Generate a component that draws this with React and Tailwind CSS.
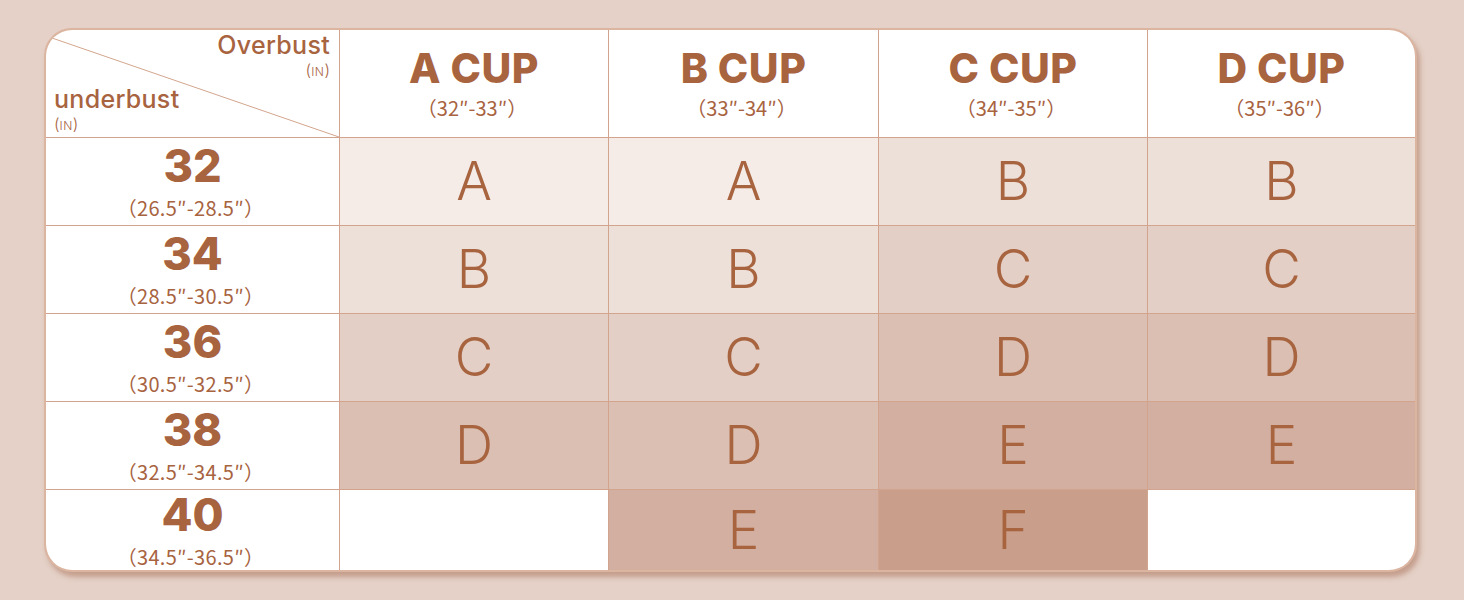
import React from "react";

const L = {
  w: "bg-white",
  1: "bg-[#f5ece8]",
  2: "bg-[#ede0d9]",
  3: "bg-[#e3cfc6]",
  4: "bg-[#dbbfb2]",
  5: "bg-[#d2afa0]",
  6: "bg-[#c99f8b]",
};

const rows = [
  { n: "32", r: "（26.5″-28.5″）", cells: [["A", 1], ["A", 1], ["B", 2], ["B", 2]] },
  { n: "34", r: "（28.5″-30.5″）", cells: [["B", 2], ["B", 2], ["C", 3], ["C", 3]] },
  { n: "36", r: "（30.5″-32.5″）", cells: [["C", 3], ["C", 3], ["D", 4], ["D", 4]] },
  { n: "38", r: "（32.5″-34.5″）", cells: [["D", 4], ["D", 4], ["E", 5], ["E", 5]] },
  { n: "40", r: "（34.5″-36.5″）", cells: [["", "w"], ["E", 5], ["F", 6], ["", "w"]] },
];

const heads = [
  ["A CUP", "（32″-33″）"],
  ["B CUP", "（33″-34″）"],
  ["C CUP", "（34″-35″）"],
  ["D CUP", "（35″-36″）"],
];

const head = { fontFamily: "Inter, 'Noto Sans', sans-serif" };
const small = { fontFamily: "'Noto Sans CJK SC', 'Noto Sans', sans-serif" };

function Unit() {
  return (
    <span className="text-[16px] leading-[18px] font-light" style={head}>
      (<span className="text-[12px] tracking-[0.5px]">IN</span>)
    </span>
  );
}

export default function App() {
  return (
    <div className="w-[1464px] h-[600px] bg-[#e5d1c7] pl-[44px] pt-[28px] text-[#a8633f]">
      <div className="w-[1373px] h-[544px] rounded-[28px] border-2 border-[#dcb5a1] overflow-hidden shadow-[3px_5px_5px_rgba(165,110,85,0.5)] bg-[#d2a48d]">
        <div className="grid grid-cols-[293px_268px_269px_268px_267px] grid-rows-[107px_87px_87px_87px_87px_80px] gap-px">
          <div className="relative bg-white">
            <svg className="absolute inset-0" width="293" height="107">
              <line x1="6" y1="8" x2="293" y2="107" stroke="#d3a58e" strokeWidth="1" />
            </svg>
            <div className="absolute right-[9px] top-[0px] flex flex-col items-end" style={head}>
              <span className="text-[25px] font-medium leading-[31px] tracking-[0.3px]">Overbust</span>
              <Unit />
            </div>
            <div className="absolute left-[8px] top-[54px] flex flex-col items-start" style={head}>
              <span className="text-[25px] font-medium leading-[31px] tracking-[0.3px]">underbust</span>
              <Unit />
            </div>
          </div>
          {heads.map(([t, r]) => (
            <div key={t} className="bg-white flex flex-col items-center justify-center pb-[3px]">
              <span className="text-[41px] font-extrabold leading-[50px] tracking-[0.5px]" style={head}>{t}</span>
              <span className="text-[20px] leading-[29px] -ml-[4px]" style={small}>{r}</span>
            </div>
          ))}
          {rows.map((row) => (
            <React.Fragment key={row.n}>
              <div className="bg-white flex flex-col items-center justify-center pb-[3px]">
                <span className="text-[45px] font-extrabold leading-[55px]" style={head}>{row.n}</span>
                <span className="text-[20px] leading-[29px] -ml-[4px] tracking-[0.3px]" style={small}>{row.r}</span>
              </div>
              {row.cells.map(([c, lv], i) => (
                <div key={i} className={`${L[lv]} flex items-center justify-center`}>
                  <span className="text-[53px] font-light leading-none" style={head}>{c}</span>
                </div>
              ))}
            </React.Fragment>
          ))}
        </div>
      </div>
    </div>
  );
}
